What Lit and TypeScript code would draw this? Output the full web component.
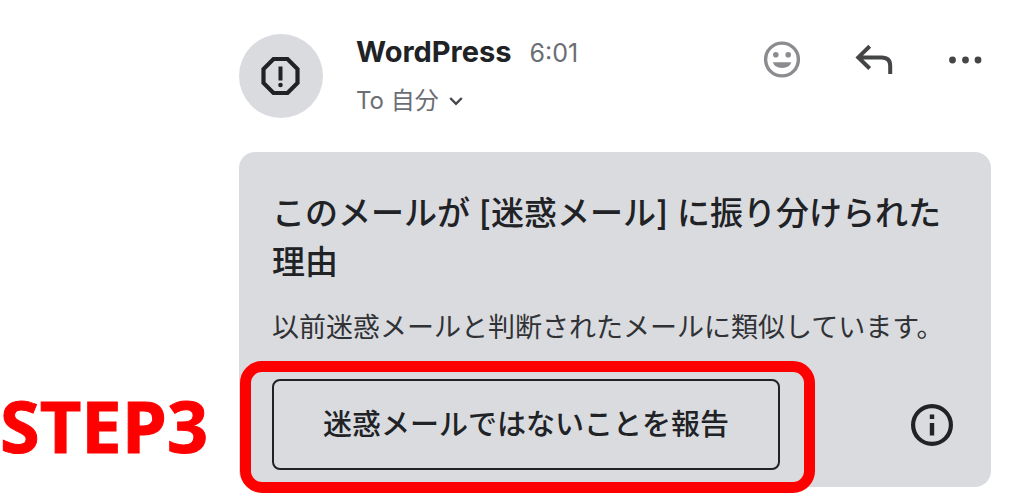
import { LitElement, html, css } from "lit";
import { customElement } from "lit/decorators.js";

@customElement("mail-header")
class MailHeader extends LitElement {
  static styles = css`
    :host { display: block; }
    .header { display: flex; align-items: flex-start; }
    .avatar {
      width: 84px; height: 84px; border-radius: 50%; background: #dadbdf;
      display: flex; align-items: center; justify-content: center; flex: none;
    }
    .who { flex: 1; margin-left: 33px; min-width: 0; }
    .line { display: flex; align-items: baseline; gap: 18px; line-height: 36px; }
    .name { font-size: 29px; font-weight: 700; margin: 0; color: #202226; }
    .time { font-size: 25px; color: #6b6e73; }
    .to {
      display: flex; align-items: center; gap: 10px; margin-top: 12px; padding: 0;
      border: 0; background: none; font: inherit; font-size: 24px; line-height: 36px; color: #6b6e73;
    }
    .actions { display: flex; align-items: center; gap: 48px; padding: 5px 8px 0 0; }
    .icon { padding: 0; border: 0; background: none; width: 42px; height: 42px; display: block; }
    svg { display: block; }
  `;
  render() {
    return html`<header class="header">
      <div class="avatar">
        <svg width="40" height="40" viewBox="0 0 40 40" fill="none" stroke="#202226">
          <path d="M12.5 3h14l10 10v14l-10 10h-14l-10-10V13z" stroke-width="4.2" />
          <path d="M19.5 10.5v14" stroke-width="4" />
          <circle cx="19.5" cy="29" r="2.3" fill="#202226" stroke="none" />
        </svg>
      </div>
      <div class="who">
        <div class="line"><h1 class="name">WordPress</h1><time class="time">6:01</time></div>
        <button class="to"><span>To 自分</span>
          <svg width="14" height="10" viewBox="0 0 14 10" fill="none" stroke="#45474a" stroke-width="2.4"><path d="M1.2 2l5.8 5.8L12.8 2" /></svg>
        </button>
      </div>
      <div class="actions">
        <button class="icon" aria-label="Add reaction">
          <svg width="42" height="42" viewBox="0 0 42 42">
            <circle cx="21" cy="20.5" r="16.4" fill="none" stroke="#8b8c8f" stroke-width="3.4" />
            <circle cx="14.8" cy="15.7" r="2.8" fill="#8b8c8f" />
            <circle cx="27.2" cy="15.7" r="2.8" fill="#8b8c8f" />
            <path d="M11.8 23.3h18.6a9.6 7.6 0 0 1-18.6 0z" fill="#8b8c8f" />
          </svg>
        </button>
        <button class="icon" aria-label="Reply">
          <svg width="42" height="42" viewBox="0 0 42 42" fill="none" stroke="#444547" stroke-width="4">
            <path d="M18.7 7.3L7.3 18.4 18.7 29.5M7.3 18.4H30.5q8.7 0 8.7 8.4v8.2" />
          </svg>
        </button>
        <button class="icon" aria-label="More">
          <svg width="42" height="42" viewBox="0 0 42 42" fill="#444547">
            <circle cx="11.5" cy="21" r="3.4" /><circle cx="24.5" cy="21" r="3.4" /><circle cx="37" cy="21" r="3.4" />
          </svg>
        </button>
      </div>
    </header>`;
  }
}

@customElement("spam-notice")
class SpamNotice extends LitElement {
  static styles = css`
    :host { display: block; }
    .card { background: #dadbdf; border-radius: 16px; padding: 37px 34px 17px 33px; color: #202226; }
    .title { margin: 0; font-size: 33px; line-height: 49px; font-weight: 500; }
    .reason { margin: 21px 0 31px; font-size: 27px; line-height: 40px; color: #303236; }
    .row { display: flex; align-items: center; justify-content: space-between; }
    .spot { position: relative; flex: 0 1 508px; }
    .spot::after {
      content: ""; position: absolute; inset: -18px -35px -23px -32px;
      border: 11px solid #f00; border-radius: 22px; pointer-events: none;
    }
    .report {
      display: block; width: 100%; padding: 22px 0; border: 2px solid #202226; border-radius: 8px;
      background: none; font: inherit; font-size: 29px; line-height: 43px; font-weight: 500; color: #202226;
    }
    .info { padding: 0; border: 0; background: none; }
    svg { display: block; }
  `;
  render() {
    return html`<section class="card">
      <h2 class="title">このメールが [迷惑メール] に振り分けられた理由</h2>
      <p class="reason">以前迷惑メールと判断されたメールに類似しています。</p>
      <div class="row">
        <div class="spot"><button class="report">迷惑メールではないことを報告</button></div>
        <button class="info" aria-label="Info">
          <svg width="50" height="42" viewBox="0 0 50 42">
            <circle cx="25" cy="21" r="18.9" fill="none" stroke="#202226" stroke-width="4.2" />
            <path d="M22.8 10.5h4.4v4.4h-4.4zM22.8 19h4.4v12.5h-4.4z" fill="#202226" />
          </svg>
        </button>
      </div>
    </section>`;
  }
}

@customElement("app-root")
class AppRoot extends LitElement {
  static styles = css`
    :host {
      display: block; min-height: 100vh; background: #fff; overflow: hidden;
      font-family: Inter, "Noto Sans CJK JP", sans-serif;
    }
    .page { display: grid; grid-template-columns: 239px minmax(0, 1fr); padding: 34px 33px 0 0; }
    .head { grid-column: 2; }
    .step {
      align-self: end; padding-bottom: 26px; font-family: "Open Sans", sans-serif;
      font-size: 72px; line-height: 72px; font-weight: 700; color: #f00;
      -webkit-text-stroke: 1px #f00;
    }
    .notice { margin-top: 33px; }
  `;
  render() {
    return html`<main class="page">
      <mail-header class="head"></mail-header>
      <div class="step">STEP3</div>
      <spam-notice class="notice"></spam-notice>
    </main>`;
  }
}
